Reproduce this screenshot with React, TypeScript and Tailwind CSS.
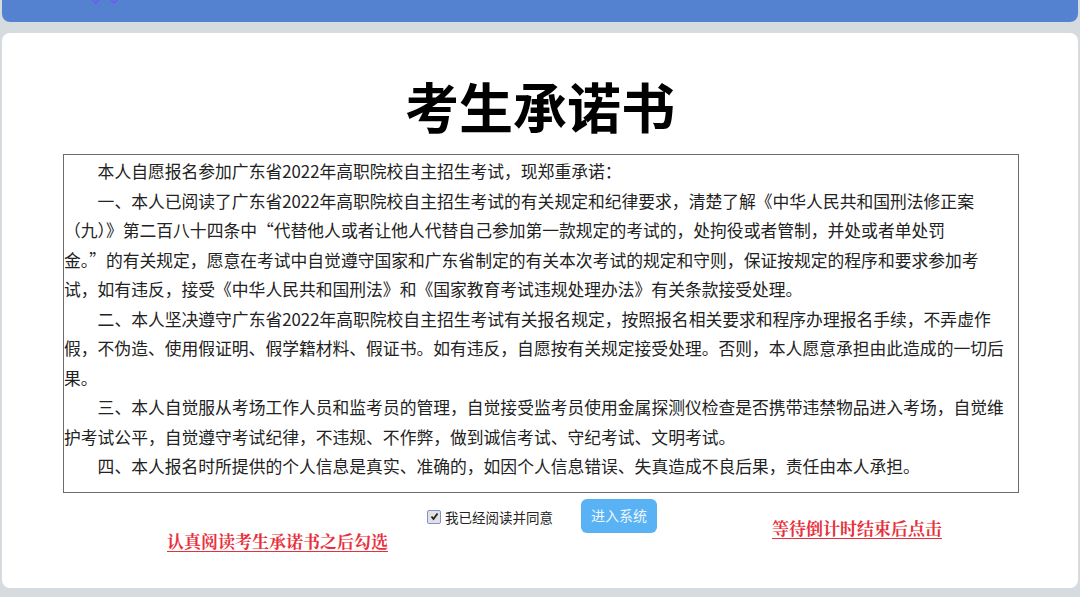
import React from 'react';

const lines: { text: string; indent?: boolean }[] = [
  { text: '本人自愿报名参加广东省2022年高职院校自主招生考试，现郑重承诺：', indent: true },
  { text: '一、本人已阅读了广东省2022年高职院校自主招生考试的有关规定和纪律要求，清楚了解《中华人民共和国刑法修正案', indent: true },
  { text: '（九）》第二百八十四条中“代替他人或者让他人代替自己参加第一款规定的考试的，处拘役或者管制，并处或者单处罚' },
  { text: '金。”的有关规定，愿意在考试中自觉遵守国家和广东省制定的有关本次考试的规定和守则，保证按规定的程序和要求参加考' },
  { text: '试，如有违反，接受《中华人民共和国刑法》和《国家教育考试违规处理办法》有关条款接受处理。' },
  { text: '二、本人坚决遵守广东省2022年高职院校自主招生考试有关报名规定，按照报名相关要求和程序办理报名手续，不弄虚作', indent: true },
  { text: '假，不伪造、使用假证明、假学籍材料、假证书。如有违反，自愿按有关规定接受处理。否则，本人愿意承担由此造成的一切后' },
  { text: '果。' },
  { text: '三、本人自觉服从考场工作人员和监考员的管理，自觉接受监考员使用金属探测仪检查是否携带违禁物品进入考场，自觉维', indent: true },
  { text: '护考试公平，自觉遵守考试纪律，不违规、不作弊，做到诚信考试、守纪考试、文明考试。' },
  { text: '四、本人报名时所提供的个人信息是真实、准确的，如因个人信息错误、失真造成不良后果，责任由本人承担。', indent: true },
];

const sans = 'font-["Microsoft_YaHei","Noto_Sans_CJK_SC",sans-serif]';

export default function App() {
  return (
    <div className={`h-[597px] w-[1080px] overflow-hidden bg-[#d6dbe0] flex flex-col ${sans}`}>
      {/* top bar */}
      <div className="mx-[2px] h-[22px] shrink-0 rounded-b-lg bg-[#5481d0] flex items-start pl-[90px] gap-[10px]">
        <svg width="8" height="4" viewBox="0 0 8 4">
          <path d="M1 0 L4 3 L7 0" stroke="#6e5cf0" strokeWidth="1.6" fill="none" />
        </svg>
        <svg width="8" height="4" viewBox="0 0 8 4">
          <path d="M1 0 L4 3 L7 0" stroke="#6e5cf0" strokeWidth="1.6" fill="none" />
        </svg>
      </div>

      {/* card */}
      <div className="mx-[2px] mt-[11px] mb-[9px] flex-1 rounded-lg bg-white flex flex-col">
        <h1 className="mt-[38px] h-[70px] text-center text-[54px] leading-[70px] font-bold text-black">
          考生承诺书
        </h1>

        <div className="ml-[61px] mt-[13px] w-[956px] border border-[#6b6b6b] pt-[2px] pb-[10px] text-[16.8px] leading-[29.5px] text-[#222]">
          {lines.map((l, i) => (
            <div key={i} className={`whitespace-nowrap ${l.indent ? 'pl-[33.6px]' : ''}`}>
              {l.text}
            </div>
          ))}
        </div>

        <div className="flex items-start">
          <div className='ml-[165px] mt-[37px] text-[17px] leading-[22px] font-bold text-[#e8303c] underline underline-offset-[3px] font-["Noto_Serif_CJK_SC","Noto_Sans_CJK_SC",serif]'>
            认真阅读考生承诺书之后勾选
          </div>

          <label className="ml-[39px] mt-[14px] flex items-center gap-[4px] text-[13.5px] leading-[20px] text-[#222]">
            <span className="flex h-[14px] w-[14px] items-center justify-center border border-[#7f92d6] bg-[#e2e2e2] rounded-[2px]">
              <svg width="9" height="9" viewBox="0 0 9 9">
                <path d="M1.5 4.5 L3.5 7 L7.5 1.5" stroke="#222" strokeWidth="1.8" fill="none" />
              </svg>
            </span>
            我已经阅读并同意
          </label>

          <button className="ml-[28px] mt-[6px] h-[34px] w-[76px] rounded-md bg-[#58b2f4] text-[14px] text-[#eef7ff]">
            进入系统
          </button>

          <div className='ml-[115px] mt-[24px] text-[17px] leading-[22px] font-bold text-[#e8303c] underline underline-offset-[3px] font-["Noto_Serif_CJK_SC","Noto_Sans_CJK_SC",serif]'>
            等待倒计时结束后点击
          </div>
        </div>
      </div>
    </div>
  );
}
